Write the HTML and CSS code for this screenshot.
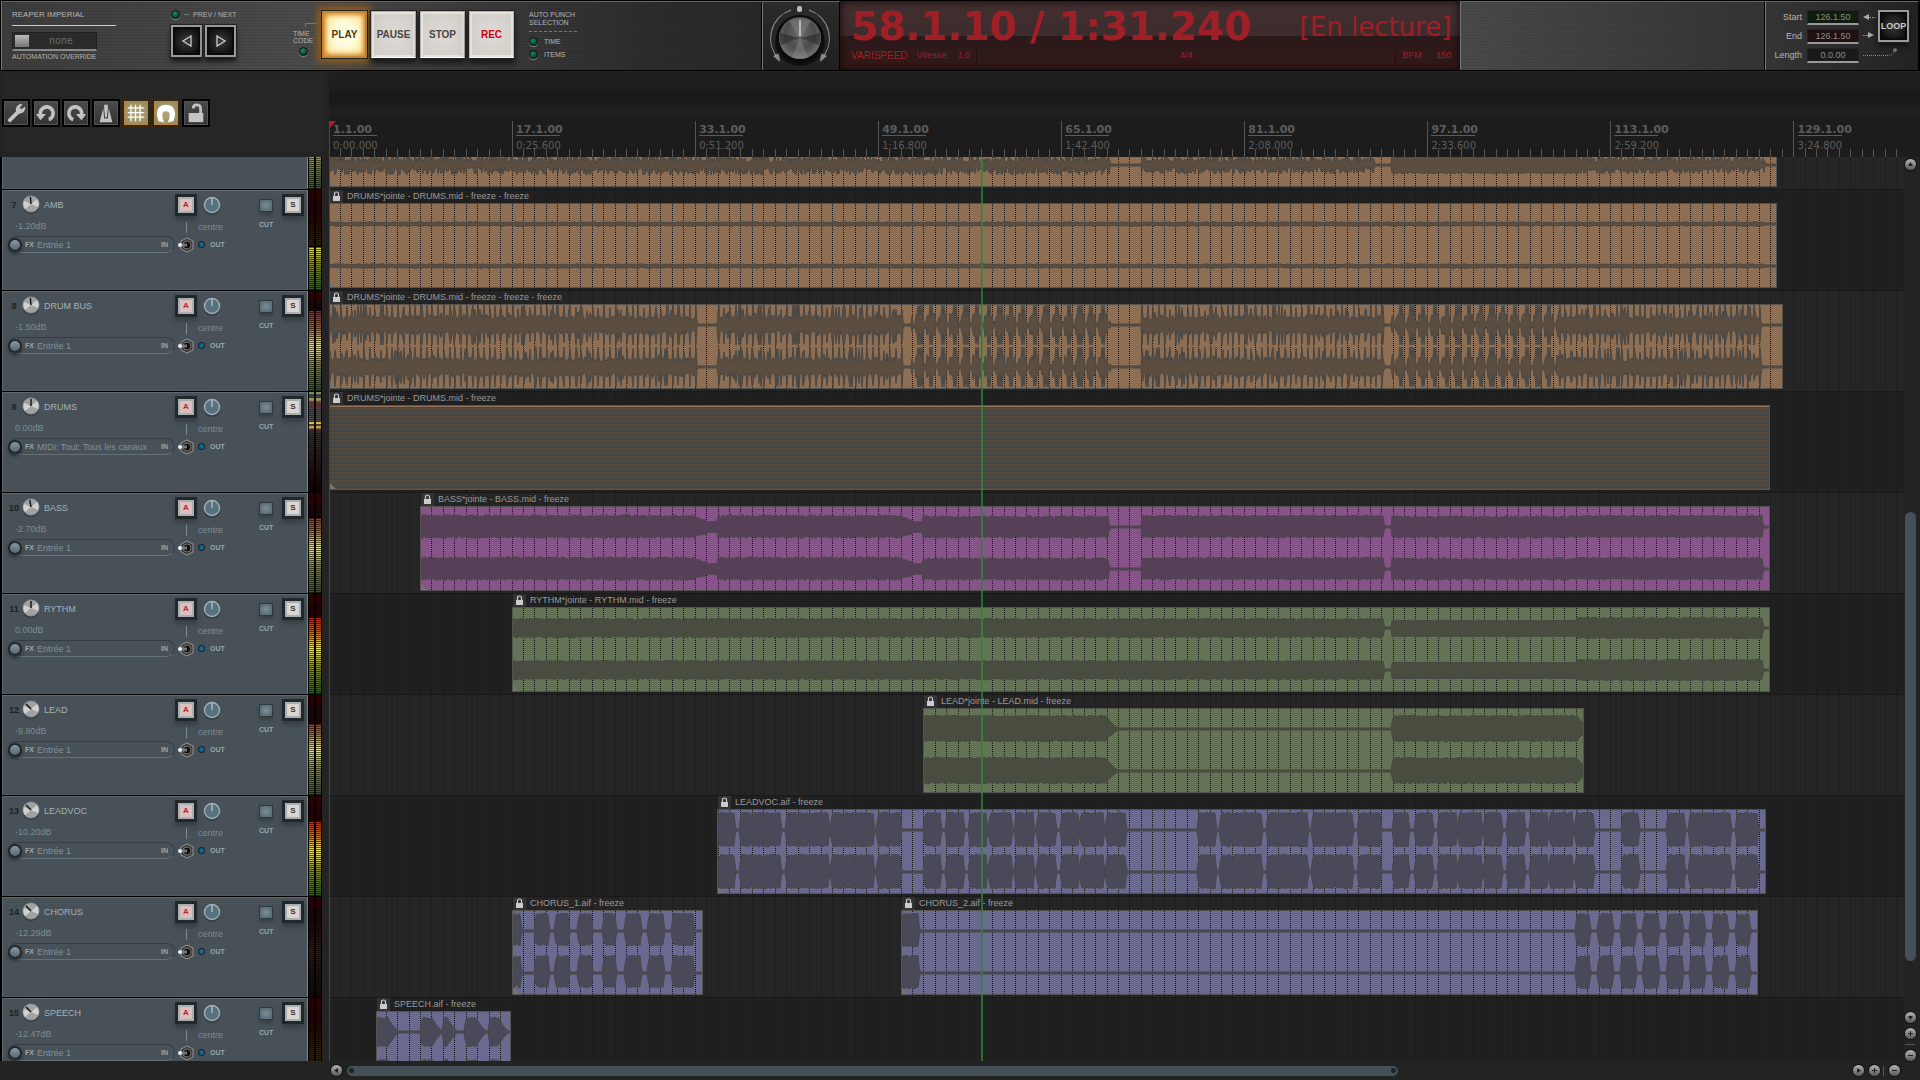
FILE: index.html
```
<!DOCTYPE html>
<html lang="fr">
<head>
    <meta charset="UTF-8">
    <meta name="viewport" content="width=device-width, initial-scale=1.0">
    <title>REAPER Imperial</title>
    <link rel="stylesheet" href="styles.css">
</head>
<body>
    <header class="transport">
        <section class="panel controls">
            <div class="brand">
                <h1>REAPER IMPERIAL</h1>
                <div class="override">
                    <span class="handle"></span>
                    <select id="override"><option>none</option></select>
                </div>
                <label for="override">AUTOMATION OVERRIDE</label>
            </div>
            <div class="prevNext">
                <div class="ledLine"><i class="led"></i><i class="dash"></i>PREV / NEXT</div>
                <div class="arrows">
                    <button class="darkButton" aria-label="Previous"><svg width="12" height="14" viewBox="0 0 12 14"><path d="M10 2 L2 7 L10 12 Z" fill="none" stroke="#ccc" stroke-width="1.3"/></svg></button>
                    <button class="darkButton" aria-label="Next"><svg width="12" height="14" viewBox="0 0 12 14"><path d="M2 2 L10 7 L2 12 Z" fill="none" stroke="#ccc" stroke-width="1.3"/></svg></button>
                </div>
            </div>
            <div class="timeCode">
                <i class="elbow"></i>
                <span>TIME<br>CODE</span>
                <i class="led"></i>
            </div>
            <div class="mainButtons">
                <button class="bigButton lit">PLAY</button>
                <button class="bigButton">PAUSE</button>
                <button class="bigButton">STOP</button>
                <button class="bigButton rec">REC</button>
            </div>
            <div class="punch">
                <div class="punchTitle">AUTO PUNCH<br>SELECTION</div>
                <div class="ledLine"><i class="led"></i>TIME</div>
                <div class="ledLine"><i class="led"></i>ITEMS</div>
            </div>
        </section>

        <section class="panel jog">
            <svg width="76" height="66" viewBox="2 1 76 66">
                <defs>
                    <radialGradient id="jogShade" cx="50%" cy="40%" r="60%">
                        <stop offset="0" stop-color="#6e6e6e"/>
                        <stop offset=".6" stop-color="#4c4c4c"/>
                        <stop offset="1" stop-color="#777"/>
                    </radialGradient>
                </defs>
                <path d="M30 9 A30 30 0 0 0 17 57" fill="none" stroke="#8a8a8a" stroke-width="1.2"/>
                <path d="M48 9 A30 30 0 0 1 61 57" fill="none" stroke="#8a8a8a" stroke-width="1.2"/>
                <path d="M12 55 L18 52 L19 61 Z M66 55 L60 52 L59 61 Z" fill="#8a8a8a"/>
                <ellipse cx="39" cy="42" rx="25" ry="23" fill="#0c0c0c" opacity=".7"/>
                <circle cx="39" cy="38" r="24" fill="#0b0b0b"/>
                <circle cx="39" cy="37" r="21" fill="url(#jogShade)"/>
                <path d="M39 37 L31 56 A21 21 0 0 0 47 56 Z M39 37 L28 20 A21 21 0 0 1 50 20 Z" fill="#8b8b8b" opacity=".45"/>
                <path d="M39 37 L19 32 A21 21 0 0 0 20 44 Z M39 37 L59 32 A21 21 0 0 1 58 44 Z" fill="#222" opacity=".5"/>
                <path d="M39 19 V35" stroke="#fff" stroke-width="1"/>
                <rect x="36" y="5" width="5" height="6" rx="2" fill="#bbb"/>
            </svg>
        </section>

        <section class="display">
            <div class="displayTop">
                <strong class="clock">58.1.10 / 1:31.240</strong>
                <span class="state">[En lecture]</span>
            </div>
            <div class="displayBottom">
                <span class="varispeed"><b>VARISPEED</b><span>Vitesse:</span><span>1.0</span></span>
                <span class="signature">4/4</span>
                <span class="bpm"><span>BPM</span><span>150</span></span>
            </div>
        </section>

        <section class="panel filler"></section>

        <section class="panel loop">
            <div class="loopFields">
                <label for="loopStart">Start</label>
                <input class="start" id="loopStart" value="126.1.50">
                <label for="loopEnd">End</label>
                <input class="end" id="loopEnd" value="126.1.50">
                <label for="loopLength">Length</label>
                <input id="loopLength" value="0.0.00">
            </div>
            <svg class="loopWires" width="36" height="60" viewBox="0 0 36 60">
                <path d="M0 11 L6 8 V14 Z M11 29 L5 26 V32 Z" fill="#aaa"/>
                <path d="M6 11.500 H13 M0 29.500 H6" stroke="#999" stroke-dasharray="2 1"/>
                <path d="M0 49.500 H26 Q31 49 31 44" fill="none" stroke="#888" stroke-dasharray="1 1"/>
                <circle cx="32" cy="44" r="2" fill="#777"/>
            </svg>
            <button class="darkButton loopButton">LOOP</button>
        </section>
    </header>

    <div class="toolbar">
        <button aria-label="Settings"><svg viewBox="0 0 24 24"><path d="M3 19 L12 10 Q11 4 17 2 L19 3 L16 6 L18 8 L22 5 Q23 12 15 13 L6 22 Q3 22 3 19 Z"/></svg></button>
        <button aria-label="Undo"><svg viewBox="0 0 24 24"><path class="stroke" d="M6 14 A7 7 0 1 1 15 19"/><path d="M1 13 H12 L6 20 Z"/></svg></button>
        <button aria-label="Redo"><svg viewBox="0 0 24 24"><path class="stroke" d="M18 14 A7 7 0 1 0 9 19"/><path d="M23 13 H12 L18 20 Z"/></svg></button>
        <button aria-label="Metronome"><svg viewBox="0 0 24 24"><path d="M9 7 L10 18 H14 L15 7 L19 22 H5 Z"/><path d="M10 3 H14 V7 L13 17 H11 L10 7 Z"/></svg></button>
        <button class="on" aria-label="Grid"><svg viewBox="0 0 24 24"><path class="thin" d="M3 6.500 H21 M3 11.500 H21 M3 16.500 H21 M6.500 3 V21 M11.500 3 V21 M16.500 3 V21"/></svg></button>
        <button class="on" aria-label="Snap"><svg viewBox="0 0 24 24"><path d="M4 21 Q2 17 2 12 Q3 3 12 3 Q21 3 22 12 Q22 17 20 21 L14 22 Q16 19 16 14 Q16 10 12 10 Q8 10 8 14 Q8 19 10 22 Z"/></svg></button>
        <button aria-label="Lock"><svg viewBox="0 0 24 24"><path d="M4 12 H20 V22 H4 Z"/><path class="mid" d="M17 12 V7 Q17 3 12.500 3 Q9 3 9 7"/></svg></button>
    </div>

    <div class="ruler">
        <svg class="ticks" id="ticks"></svg>
        <div class="marks" id="marks"></div>
    </div>

    <div class="trackList" id="trackList"></div>

    <main class="arrange">
        <svg class="grid" id="grid"></svg>
        <div class="lanes" id="lanes"></div>
        <i class="editCursor"></i>
        <i class="playCursor"></i>
    </main>

    <div class="scrollY">
        <button class="round up" aria-label="Up"></button>
        <div class="trackY"><i class="thumbY"></i></div>
        <button class="round down" aria-label="Down"></button>
        <button class="round plus" aria-label="Zoom in"></button>
        <i class="ruleY"></i>
        <button class="round minus" aria-label="Zoom out"></button>
    </div>

    <div class="scrollX">
        <button class="round left" aria-label="Left"></button>
        <div class="trackX"><i class="thumbX"></i></div>
        <button class="round right" aria-label="Right"></button>
        <button class="round plus" aria-label="Zoom in"></button>
        <i class="ruleX"></i>
        <button class="round minus" aria-label="Zoom out"></button>
    </div>

    <script src="app.js"></script>
</body>
</html>
```
FILE: styles.css
```
* {
    box-sizing: border-box;
}

body {
    margin: 0;
    height: 100vh;
    display: grid;
    grid-template-columns: 329px minmax(0, 1fr) 16px;
    grid-template-rows: 71px 86px minmax(0, 1fr) 19px;
    background: #232323;
    color: #aaa;
    font-family: "Liberation Sans", Arial, sans-serif;
    font-size: 9px;
    overflow: hidden;
}

button, input, select {
    font: inherit;
    color: inherit;
    border: 0;
    padding: 0;
    margin: 0;
    background: none;
    appearance: none;
    border-radius: 0;
}

button {
    cursor: pointer;
}

/* transport */
.transport {
    grid-column: 1 / -1;
    display: grid;
    grid-template-columns: minmax(0, 762fr) 78px minmax(0, 621fr) minmax(0, 305fr) 154px;
    background: #000;
    padding: 1px 1px 2px;
}

.panel {
    border-top: 1px solid #666;
    border-left: 1px solid #777;
    border-right: 1px solid #000;
    background: repeating-linear-gradient(rgba(0, 0, 0, 0.07) 0 1px, transparent 1px 3px), linear-gradient(90deg, #3c3c3c, #4a4a4a 40%, #2c2c2c 85%, #282828);
}

.controls {
    display: grid;
    grid-template-columns: 159px 118px 32px 208px 1fr;
    padding-left: 10px;
    font-size: 8px;
    line-height: 8px;
    color: #b4b4b4;
}

.brand h1 {
    margin: 0;
    width: 104px;
    padding: 9px 0 6px;
    border-bottom: 1px solid #ccc;
    font-size: 8px;
    font-weight: normal;
    line-height: 8px;
}

.brand label {
    font-size: 7px;
}

.override {
    display: flex;
    width: 85px;
    height: 19px;
    margin: 6px 0 2px;
    padding: 2px;
    background: #2b2b2b;
    border: 1px solid #222;
    border-bottom: 2px solid #888;
}

.handle {
    width: 14px;
    background: linear-gradient(#bbb, #777);
}

.override select {
    flex: 1;
    padding-left: 20px;
    color: #65717a;
    font: 10px "Liberation Mono", monospace;
}

.led {
    width: 9px;
    height: 9px;
    border-radius: 50%;
    border: 1px solid #111;
    background: radial-gradient(circle at 40% 35%, #1c8a5c, #04402a 70%);
    box-shadow: 0 1px 1px #888;
}

.dash {
    width: 5px;
    height: 1px;
    background: #777;
}

.ledLine {
    display: flex;
    align-items: center;
    gap: 6px;
}

.prevNext {
    padding-top: 7px;
}

.prevNext .ledLine {
    font-size: 7px;
    gap: 4px;
    height: 11px;
}

.arrows {
    display: flex;
    gap: 3px;
    padding-top: 5px;
}

.darkButton {
    width: 31px;
    height: 32px;
    display: flex;
    align-items: center;
    justify-content: center;
    border: 2px solid #999;
    outline: 1px solid #222;
    background: radial-gradient(#3a3a3a, #0e0e0e 75%);
    box-shadow: inset 0 0 0 2px #0a0a0a, 0 4px 5px #111;
}

.timeCode {
    width: 28px;
    display: flex;
    flex-direction: column;
    align-items: center;
    justify-self: start;
    padding-top: 21px;
    gap: 3px;
    font-size: 7px;
    line-height: 7px;
}

.elbow {
    width: 12px;
    height: 4px;
    align-self: flex-end;
    border-top: 1px solid #777;
    border-left: 1px solid #777;
}

.mainButtons {
    display: flex;
    gap: 2px;
    padding-top: 8px;
}

.bigButton {
    width: 47px;
    height: 49px;
    border: 2px solid #b5b2ae;
    border-bottom-color: #fff;
    outline: 1px solid #222;
    outline-offset: -1px;
    background: radial-gradient(#dedad6, #cfcbc7);
    box-shadow: inset 0 0 0 2px #e6e3df, 0 5px 6px #1a1a1a;
    color: #4a4644;
    font-size: 10px;
    font-weight: bold;
}

.bigButton.rec {
    color: #c8000a;
}

.bigButton.lit {
    border: 3px solid #c78836;
    background: radial-gradient(#fffde0 35%, #ffeaa0 75%, #f2b655);
    box-shadow: inset 0 0 4px 2px #d18e3c, 0 0 8px 3px #9c5f17;
    color: #4a3c10;
}

.punch {
    display: flex;
    flex-direction: column;
    gap: 4px;
    padding-top: 9px;
    font-size: 7px;
}

.punchTitle {
    width: 48px;
    padding-bottom: 4px;
    border-bottom: 1px dashed #777;
    margin-bottom: 1px;
    white-space: nowrap;
}

.jog {
    background: linear-gradient(#2b2b2b, #202020);
}

.display {
    display: flex;
    flex-direction: column;
    justify-content: space-between;
    background: linear-gradient(#433031, #3d2c2d 50%, #2b1a1b 51%, #341818);
    box-shadow: inset 0 0 8px #120808;
    color: #a01f27;
    padding: 0 9px 4px 11px;
    white-space: nowrap;
}

.displayTop {
    display: flex;
    justify-content: space-between;
    align-items: center;
    height: 48px;
    padding-top: 4px;
    font-family: "DejaVu Sans", sans-serif;
}

.clock {
    font-size: 39px;
    line-height: 46px;
}

.state {
    font-size: 26px;
}

.displayBottom {
    display: grid;
    grid-template-columns: 126px 1fr 56px;
    height: 16px;
    line-height: 11px;
    font-size: 9px;
}

.varispeed {
    display: flex;
    gap: 9px;
    border-right: 1px solid #1c1010;
}

.varispeed b {
    font-size: 10px;
    font-weight: normal;
}

.signature {
    text-align: center;
}

.bpm {
    display: flex;
    justify-content: space-between;
    border-left: 1px solid #1c1010;
    padding-left: 6px;
}

.filler {
    background: repeating-linear-gradient(rgba(0, 0, 0, 0.06) 0 1px, transparent 1px 3px), linear-gradient(90deg, #494949, #333);
}

.loop {
    display: flex;
    align-items: flex-start;
    background: linear-gradient(90deg, #353535, #222);
}

.loopFields {
    display: grid;
    grid-template-columns: 36px 52px;
    gap: 4px 5px;
    padding-top: 8px;
    line-height: 15px;
    text-align: right;
    color: #b5b5b5;
}

.loopFields input {
    width: 52px;
    height: 15px;
    background: #191919;
    border: 1px solid #222;
    border-bottom: 2px solid #999;
    text-align: center;
    color: #8d8d8d;
}

.loopFields .start {
    background: #0f1c10;
}

.loopFields .end {
    background: #201011;
}

.loopWires {
    margin-top: 4px;
    margin-left: 4px;
}

.loopButton {
    margin: 8px 0 0 -21px;
    flex: none;
    font-size: 9px;
    font-weight: bold;
    color: #ccc;
}

/* toolbar */
.toolbar {
    display: flex;
    align-items: flex-start;
    gap: 2px;
    margin: 2px 7px 5px 2px;
    padding-top: 26px;
    background: #262626;
}

.toolbar button {
    width: 28px;
    height: 28px;
    border: 2px solid #000;
    background: linear-gradient(#4b4b4b, #333);
    box-shadow: inset 0 0 0 1px #555;
}

.toolbar button.on {
    border-color: #3a2508;
    background: radial-gradient(#b3a878, #8f8557);
    box-shadow: inset 0 0 0 1px #b28446;
}

.toolbar svg {
    display: block;
    width: 22px;
    height: 22px;
    margin: 1px;
    fill: #c3c3c3;
    stroke: none;
}

.toolbar .on svg {
    fill: #fff;
}

.toolbar .stroke {
    fill: none;
    stroke: #c3c3c3;
    stroke-width: 4;
}

.toolbar .mid {
    fill: none;
    stroke: #c3c3c3;
    stroke-width: 3;
}

.toolbar .thin {
    stroke: #fff;
    stroke-width: 1.4;
}

/* ruler */
.ruler {
    grid-column: 2 / 4;
    position: relative;
    display: flex;
    align-items: flex-end;
    background: linear-gradient(#232323 0 2px, #1f1f1f 2px 18px, #1a1a1a 18px 34px, #1f1f1f 34px 47px, #1c1c1c 47px);
}

.ticks {
    position: absolute;
    left: 0;
    bottom: 0;
    width: calc(100% - 16px);
    height: 36px;
}

.marks {
    display: flex;
    width: calc(100% - 16px);
    height: 36px;
}

.mark {
    flex: none;
    min-width: 0;
    padding: 2px 0 0 4px;
    color: #5c5c5c;
    font-family: "DejaVu Sans", sans-serif;
    white-space: nowrap;
}

.mark b {
    display: block;
    width: 44px;
    height: 13px;
    border-bottom: 1px solid #5c5c5c;
    font-size: 11px;
    line-height: 13px;
}

.mark span {
    display: block;
    font-size: 10px;
    line-height: 19px;
}

/* track control panels */
.trackList {
    margin-right: 7px;
    padding-left: 2px;
    overflow: hidden;
    background: #000;
}

.track {
    display: flex;
    height: 101px;
    border-bottom: 1px solid #000;
}

.track:first-child, .lane:first-child {
    margin-top: -68px;
}

.strip {
    flex: 1;
    display: grid;
    grid-template-columns: 171px 24px 61px 1fr;
    background: #475157;
    border: 1px solid #5d6a70;
    border-right-color: #7a878d;
    border-bottom-color: #4e5a60;
}

.trackHead {
    display: grid;
    grid-template-columns: 16px 20px 1fr;
    align-items: center;
    height: 27px;
    padding-left: 3px;
    text-align: center;
}

.number {
    color: #1d2225;
    font-weight: bold;
    font-size: 9px;
}

.name {
    padding-left: 2px;
    color: #a5b1b6;
    text-align: left;
}

.volume {
    height: 17px;
    padding-left: 12px;
    line-height: 17px;
    color: #7d8c93;
}

.knob {
    display: block;
    width: 18px;
    height: 20px;
}

.pill {
    display: flex;
    align-items: center;
    gap: 3px;
    width: 167px;
    height: 17px;
    margin: 1px 0 0 5px;
    padding-right: 6px;
    border: 1px solid #333e44;
    border-bottom-color: #63727a;
    border-radius: 9px;
    color: #9aa7ad;
    font-size: 7px;
    font-weight: bold;
}

.pill button {
    width: 14px;
    height: 14px;
    margin-left: -1px;
    border-radius: 50%;
    border: 2px solid #20282c;
    background: linear-gradient(#8896a0, #566872);
    box-shadow: 0 2px 3px #2a3236;
}

.pill select {
    flex: 1;
    color: #82929a;
    font-size: 9px;
    font-weight: normal;
}

.armColumn, .panColumn {
    display: flex;
    flex-direction: column;
}

.keyButton {
    width: 22px;
    height: 22px;
    flex: none;
    border: 3px solid #22272a;
    background: #ddd5d2;
    box-shadow: inset 0 0 0 2px #a5b0b5, 0 4px 4px #363f44;
    color: #333;
    font-size: 8px;
    font-weight: bold;
    line-height: 14px;
}

.keyButton.arm {
    background: #dcc0c0;
    color: #b3272f;
}

.armColumn {
    align-items: center;
    padding-top: 3px;
}

.stem {
    width: 1px;
    height: 11px;
    margin: 6px 0 4px;
    background: #7c898f;
}

.toggle {
    width: 18px;
    height: 16px;
}

.toggle svg, .knob svg {
    display: block;
}

.panColumn {
    padding-top: 5px;
}

.panColumn span {
    padding-top: 3px;
    line-height: 17px;
    color: #7d8c93;
}

.panColumn .knob {
    margin-left: 5px;
}

.out {
    display: flex;
    align-items: center;
    gap: 5px;
    height: 12px;
    margin-top: 2px;
    font-size: 7px;
    font-weight: bold;
    color: #9aa7ad;
}

.out .led {
    width: 7px;
    height: 7px;
    background: #0f6a94;
    box-shadow: none;
}

.muteSolo {
    display: flex;
    align-items: flex-start;
    justify-content: space-between;
    padding: 3px 3px 0 0;
    color: #9aa7ad;
    font-size: 7px;
    font-weight: bold;
    text-align: center;
}

.muteSolo label {
    display: block;
    padding-top: 9px;
}

.cut {
    display: block;
    width: 14px;
    height: 13px;
    margin: 5px 0 0;
    border: 1px solid #2e393f;
    background: radial-gradient(#7c8e98, #51626b);
    box-shadow: 0 3px 3px #384146;
}

.meter {
    width: 14px;
    display: grid;
    grid-template-columns: 5px 5px;
    gap: 2px;
    padding-left: 1px;
    background: #000;
}

.meterBar {
    background: repeating-linear-gradient(transparent 0 1px, rgba(0, 0, 0, 0.6) 1px 2px), linear-gradient(#b01818 0 20%, #b8641c 38%, #efe85a 55%, #8f8f2a 72%, #2c5a28);
}

.meterOff {
    display: block;
    background: linear-gradient(#2c0000 0 10px, rgba(12, 0, 0, 0.85) 10px);
    border-bottom: 1px solid #000;
}

.meter.midi .meterBar {
    background: repeating-linear-gradient(#4a4a4a 0 1px, #3a2626 1px 2px);
}

.meter.midi .meterOff {
    height: 100px;
    border: 0;
    background: linear-gradient(#7d8a50 0 2px, transparent 2px 6px, #909a50 6px 8px, #5a3030 10px 16px, transparent 16px 30px, #e0c040 30px 32px, #4a3a2a 32px 34px, #c0a040 34px 36px, #4a2a2a 37px, rgba(20, 0, 0, 0.4) 42px, #100000);
}

/* arrange view */
.arrange {
    position: relative;
    overflow: hidden;
}

.lane {
    height: 101px;
    position: relative;
    background: #202020;
    border-bottom: 1px solid #191919;
}

.lane:nth-child(odd) {
    background: #252525;
}

.grid {
    position: absolute;
    inset: 0;
    width: 100%;
    height: 100%;
    z-index: 1;
}

.clip {
    position: absolute;
    top: 0;
    z-index: 2;
}

.clipLabel {
    display: flex;
    gap: 4px;
    height: 13px;
    margin-left: 1px;
    line-height: 13px;
    color: #9a9a9a;
    white-space: nowrap;
}

.clipLabel svg {
    background: #333;
}

.clipBody {
    display: block;
    width: 100%;
    height: 85px;
    outline: 1px solid #55534f;
    outline-offset: -1px;
}

.clipBody line {
    stroke: #111;
    stroke-dasharray: 1 1;
    shape-rendering: crispEdges;
}

.clipBody path {
    stroke: #494846;
    stroke-width: 1;
}

.drums { background: #8e6f54; }
.drums path { fill: #5b4d40; }
.bass { background: #87548a; }
.bass path { fill: #564058; }
.synth { background: #647355; }
.synth path { fill: #484d3f; }
.voice { background: #6a6a91; }
.voice path { fill: #4a4959; }

.midiNotes {
    background: linear-gradient(#94745a 0 2px, transparent 2px), repeating-linear-gradient(#574a40 0 1px, #464544 1px 3px, #584b3f 3px 4px, #464544 4px 5px, #504b42 5px 6px, #464544 6px 8px);
}

.editCursor, .playCursor {
    position: absolute;
    top: 0;
    bottom: 0;
    left: 0;
    width: 1px;
    background: #a3202a;
    z-index: 3;
}

.playCursor {
    left: 41.4%;
    width: 2px;
    background: rgba(40, 150, 60, 0.65);
}

/* scrollbars */
.scrollY {
    grid-column: 3;
    grid-row: 3;
    display: flex;
    flex-direction: column;
    align-items: center;
    gap: 5px;
    padding: 2px 4px 0 0;
}

.trackY {
    flex: 1;
    width: 11px;
}

.thumbY {
    display: block;
    width: 11px;
    height: 54%;
    margin-top: 337px;
    border-radius: 6px;
    background: #465157;
}

.scrollX {
    grid-column: 2;
    grid-row: 4;
    display: flex;
    align-items: center;
    gap: 5px;
    padding: 0 4px 0 2px;
}

.trackX {
    flex: 1;
}

.thumbX {
    display: flex;
    align-items: center;
    justify-content: space-between;
    width: 70%;
    height: 10px;
    padding: 0 2px;
    border-radius: 5px;
    background: #465157;
}

.thumbX::before, .thumbX::after {
    content: "";
    width: 5px;
    height: 5px;
    border-radius: 50%;
    background: #1d2326;
}

.round {
    flex: none;
    width: 11px;
    height: 11px;
    border-radius: 50%;
    background: linear-gradient(#b5b5b5, #555);
    box-shadow: 0 0 1px 1px #111;
}

.round svg {
    display: block;
}

.ruleX {
    width: 1px;
    height: 10px;
    margin: 0 0 0 -2px;
    background: #555;
}

.ruleY {
    width: 10px;
    height: 1px;
    background: #555;
}
```
FILE: app.js
```
// one unit is one pixel of a 1575px wide timeline
const TOTAL = 1575;
const MEASURE = 11.442;

const percent = units => (units / TOTAL * 100) + '%';

const vocals = [
    [389, 406], [411, 452, [423, 434]], [457, 500, [469, 479]], [502, 545, [515, 526]], [548, 572, [561]],
    [595, 612], [617, 635], [640, 658], [660, 683], [686, 705], [708, 727], [732, 750], [751, 775], [777, 797],
    [869, 887], [891, 933, [903]], [938, 979, [949]], [983, 1024, [995, 1006]], [1029, 1052],
    [1064, 1080], [1086, 1104], [1109, 1128], [1129, 1153], [1155, 1173], [1178, 1196], [1201, 1219],
    [1220, 1244], [1246, 1265], [1293, 1310], [1338, 1356], [1360, 1402, [1373]], [1407, 1429]
];
const chorus1 = [[183, 192, [188]], [206, 220], [226, 240], [249, 263], [274, 287], [296, 312], [319, 335], [343, 365]];
const chorus2 = [[572, 590], [1247, 1261, [1250, 1258]], [1269, 1284, [1272]], [1292, 1307], [1314, 1330], [1338, 1354], [1361, 1376], [1384, 1399, [1387, 1392]], [1407, 1421, [1411, 1415]]];
const speech = [[47, 60], [92, 104], [114, 119], [136, 148], [160, 170]];
const drumParts = [[0, 367, 'busy'], [389, 573, 'busy'], [583, 780, 'groove'], [813, 1054, 'busy'], [1063, 1230, 'groove'], [1230, 1431, 'busy']];

const blocks = (list, up, down, tail, curve) => list.map(b => ({ from: b[0], to: b[1] - 1, notches: b[2], up, down, tail, curve, noise: 2 }));

const tracks = [
    { number: 6, level: 20, clips: [
        { from: 0, to: 1448, kind: 'drums', label: '', parts: [
            { from: 0, to: 780, up: 2, down: 2, noise: 8 }, { from: 813, to: 1045, up: 2, down: 2, noise: 7 },
            { from: 1063, to: 1250, up: 8, down: 7, noise: 2 }, { from: 1250, to: 1435, up: 2, down: 2, noise: 7 }] }] },
    { number: 7, name: 'AMB', db: '-1.20dB', input: 'Entrée 1', level: 57, angle: -5, clips: [
        { from: 0, to: 1448, kind: 'drums', label: 'DRUMS*jointe - DRUMS.mid - freeze - freeze', parts: [
            { from: 0, to: 1435, up: 1, down: 1, noise: 1.4 }] }] },
    { number: 8, name: 'DRUM BUS', db: '-1.50dB', input: 'Entrée 1', level: 20, angle: -5, clips: [
        { from: 0, to: 1454, kind: 'drums', label: 'DRUMS*jointe - DRUMS.mid - freeze - freeze - freeze',
            parts: drumParts.map(p => ({ from: p[0], to: p[1], up: 5, down: 5, noise: 5, beat: p[2] })) }] },
    { number: 9, name: 'DRUMS', db: '0.00dB', input: 'MIDI: Tout: Tous les canaux', level: 0, angle: 0, midi: true, clips: [
        { from: 0, to: 1441, kind: 'midiNotes', label: 'DRUMS*jointe - DRUMS.mid - freeze' }] },
    { number: 10, name: 'BASS', db: '-2.70dB', input: 'Entrée 1', level: 25, angle: -10, clips: [
        { from: 91, to: 1441, kind: 'bass', label: 'BASS*jointe - BASS.mid - freeze', parts: [
            { from: 91, to: 366, up: 10, down: 9, noise: 2.5 }, { from: 367, to: 371, up: 9, down: 8, noise: 0.5 },
            { from: 372, to: 376, up: 7, down: 7, noise: 0.5 }, { from: 377, to: 388, up: 5, down: 5, noise: 0.5 },
            { from: 389, to: 573, up: 10, down: 9, noise: 2.5 }, { from: 574, to: 578, up: 9, down: 8, noise: 0.5 },
            { from: 579, to: 583, up: 7, down: 7, noise: 0.5 }, { from: 584, to: 593, up: 5, down: 5, noise: 0.5 },
            { from: 594, to: 779, up: 9, down: 9, noise: 2.5 }, { from: 813, to: 1054, up: 10, down: 9, noise: 2 },
            { from: 1063, to: 1240, up: 9, down: 9, noise: 2.5 }, { from: 1241, to: 1433, up: 10, down: 9, noise: 2 }] }] },
    { number: 11, name: 'RYTHM', db: '0.00dB', input: 'Entrée 1', level: 24, angle: 0, clips: [
        { from: 183, to: 1441, kind: 'synth', label: 'RYTHM*jointe - RYTHM.mid - freeze', parts: [
            { from: 183, to: 1054, up: 8, down: 8, noise: 2 }, { from: 1063, to: 1247, up: 7, down: 8, noise: 1 },
            { from: 1248, to: 1433, up: 9, down: 9, noise: 2 }] }] },
    { number: 12, name: 'LEAD', db: '-9.80dB', input: 'Entrée 1', level: 29, angle: -45, clips: [
        { from: 594, to: 1255, kind: 'synth', label: 'LEAD*jointe - LEAD.mid - freeze', parts: [
            { from: 594, to: 776, up: 12, down: 11, noise: 2, tail: 14 }, { from: 1063, to: 1248, up: 12, down: 11, noise: 2, tail: 12 }] }] },
    { number: 13, name: 'LEADVOC', db: '-10.20dB', input: 'Entrée 1', level: 26, angle: -45, clips: [
        { from: 388, to: 1437, kind: 'voice', label: 'LEADVOC.aif - freeze', parts: blocks(vocals, 16, 15, 3, 3) }] },
    { number: 14, name: 'CHORUS', db: '-12.29dB', input: 'Entrée 1', level: 100, angle: -45, clips: [
        { from: 183, to: 374, kind: 'voice', label: 'CHORUS_1.aif - freeze', parts: blocks(chorus1, 16, 13, 3, 3) },
        { from: 572, to: 1429, kind: 'voice', label: 'CHORUS_2.aif - freeze', parts: blocks(chorus2, 16, 14, 3, 3) }] },
    { number: 15, name: 'SPEECH', db: '-12.47dB', input: 'Entrée 1', level: 100, angle: -45, clips: [
        { from: 47, to: 182, kind: 'voice', label: 'SPEECH.aif - freeze', parts: blocks(speech, 13, 13, 12, 1.6) }] }
];

let seed = 7;
function random() {
    seed = (seed * 16807) % 2147483647;
    return seed / 2147483647;
}

// extra height of a drum hit at x
function hit(beat, x) {
    if (beat === 'busy') {
        const phase = x % (MEASURE / 2);
        if (phase < 1) return 8 + random() * 10;
        return random() < 0.14 ? random() * 14 : 0;
    }
    const bar = (x % MEASURE) / MEASURE;
    if (bar > 0.45 && bar < 0.85) return Math.round(x) % 2 ? 14 : random() * 4;
    return bar < 0.25 ? -6 : random() * 3;
}

// height of the waveform above and below its axis at x
function levelAt(parts, x) {
    for (const p of parts) {
        const tail = p.tail || 1;
        if (x < p.from || x > p.to + tail) continue;
        if (x > p.to && parts.some(q => q !== p && x >= q.from && x <= q.to)) continue;
        let factor = 1;
        if (p.tail) factor = Math.min(1, 0.5 + (x - p.from) / 3);
        if (x > p.to) factor = Math.pow(1 - (x - p.to) / (tail + 1), p.curve || 1.3);
        if (p.notches && p.notches.some(n => Math.abs(n - x) < 1)) factor *= 0.6;
        const boost = p.beat ? hit(p.beat, x) : 0;
        return [
            Math.min(20, Math.max(1, (p.up + boost + random() * p.noise) * factor)),
            Math.min(20, Math.max(1, (p.down + boost + random() * p.noise) * factor))
        ];
    }
    return [1, 1];
}

function wavePath(clip, axis) {
    const top = [];
    const bottom = [];
    for (let x = clip.from; x <= clip.to; x++) {
        const [up, down] = levelAt(clip.parts, x);
        top.push(`${x - clip.from} ${(axis - up).toFixed(1)}`);
        bottom.unshift(`${x - clip.from} ${(axis + down).toFixed(1)}`);
    }
    return `<path d="M${top.join('L')}L${bottom.join('L')}Z"/>`;
}

function clipMarkup(clip) {
    const width = clip.to - clip.from;
    let inside = '';
    if (clip.parts) {
        for (let m = 1; m * MEASURE < clip.to; m++) {
            const x = Math.floor(m * MEASURE) - clip.from + 0.5;
            if (x > 0) inside += `<line x1="${x}" x2="${x}" y1="1" y2="84"/>`;
        }
        inside += wavePath(clip, 21) + wavePath(clip, 63);
    }
    inside += '<polygon points="0,77 8,85 0,85" fill="#77746f"/>';
    return `<div class="clip" style="left:${percent(clip.from)};width:${percent(width)}">
        <div class="clipLabel">
            <svg width="13" height="13" viewBox="0 0 13 13"><path d="M3 6 H10 V11 H3 Z" fill="#ccc"/><path d="M4.500 6 V4 Q4.500 2 6.500 2 Q8.500 2 8.500 4 V6" fill="none" stroke="#ccc" stroke-width="1.2"/></svg>
            <span>${clip.label}</span>
        </div>
        <svg class="clipBody ${clip.kind}" viewBox="0 0 ${width} 85" preserveAspectRatio="none">${inside}</svg>
    </div>`;
}

function volumeKnob(angle) {
    return `<svg width="18" height="20" viewBox="0 0 18 20">
        <ellipse cx="9" cy="12" rx="8" ry="7" fill="#2b3438" opacity=".6"/>
        <circle cx="9" cy="9" r="8" fill="#a2a2a2" stroke="#8b9296"/>
        <path d="M9 9 L3 14 A8 8 0 0 1 2 6 Z M9 9 L15 4 A8 8 0 0 1 16 12 Z" fill="#fff" opacity=".5"/>
        <path d="M9 9 V2" stroke="#111" stroke-width="1.4" transform="rotate(${angle} 9 9)"/>
    </svg>`;
}

function panKnob() {
    return `<svg width="18" height="20" viewBox="0 0 18 20">
        <ellipse cx="9" cy="12" rx="8" ry="7" fill="#2b3438" opacity=".6"/>
        <circle cx="9" cy="9" r="7.500" fill="#567180" stroke="#a3adb2" stroke-width="1.4"/>
        <path d="M9 9 V2" stroke="#d5dde0"/>
    </svg>`;
}

function stripMarkup(t) {
    return `<div>
            <div class="trackHead">
                <span class="number">${t.number}</span>
                <button class="knob" aria-label="Volume">${volumeKnob(t.angle)}</button>
                <span class="name">${t.name}</span>
            </div>
            <div class="volume">${t.db}</div>
            <div class="pill">
                <button aria-label="FX ${t.name}"></button>FX
                <select aria-label="Input ${t.name}"><option>${t.input}</option></select>IN
            </div>
        </div>
        <div class="armColumn">
            <button class="keyButton arm">A</button>
            <i class="stem"></i>
            <button class="toggle" aria-label="In or out"><svg width="18" height="16" viewBox="0 0 18 16">
                <path d="M10 1 L16 4 V12 L10 15 L4 12 V4 Z" fill="#3a3a3a" stroke="#999"/>
                <circle cx="10" cy="8" r="4" fill="#111" stroke="#777"/>
                <path d="M5 8 H10" stroke="#777" stroke-width="3"/>
                <circle cx="3" cy="8" r="2" fill="#eee"/>
            </svg></button>
        </div>
        <div class="panColumn">
            <button class="knob" aria-label="Pan">${panKnob()}</button>
            <span>centre</span>
            <div class="out"><i class="led"></i>OUT</div>
        </div>
        <div class="muteSolo">
            <div><button class="cut" id="cut${t.number}"></button><label for="cut${t.number}">CUT</label></div>
            <button class="keyButton">S</button>
        </div>`;
}

function trackMarkup(t) {
    const off = t.midi ? '' : `style="height:${t.level}%"`;
    return `<div class="track">
        <div class="strip">${t.name ? stripMarkup(t) : ''}</div>
        <div class="meter ${t.midi ? 'midi' : ''}">
            <div class="meterBar"><i class="meterOff" ${off}></i></div>
            <div class="meterBar"><i class="meterOff" ${off}></i></div>
        </div>
    </div>`;
}

function drawRuler() {
    const times = ['0:00.000', '0:25.600', '0:51.200', '1:16.800', '1:42.400', '2:08.000', '2:33.600', '2:59.200', '3:24.800'];
    let ticks = '';
    let lines = '';
    for (let m = 0; m * MEASURE < TOTAL; m++) {
        const x = percent(Math.floor(m * MEASURE) + 0.5);
        ticks += `<line x1="${x}" x2="${x}" y1="${m % 16 ? 28 : 0}" y2="36" stroke="#555"/>`;
        lines += `<line x1="${x}" x2="${x}" y1="0" y2="100%" stroke="#181818" stroke-dasharray="1 1"/>`;
    }
    ticks += '<path d="M0 0 H7 L1 7 V36 H0 Z" fill="#a3202a"/>';
    document.getElementById('ticks').innerHTML = ticks;
    document.getElementById('grid').innerHTML = lines;
    document.getElementById('marks').innerHTML = times.map((time, i) =>
        `<div class="mark" style="width:${percent(Math.min(16 * MEASURE, TOTAL - i * 16 * MEASURE))}"><b>${i * 16 + 1}.1.00</b><span>${time}</span></div>`
    ).join('');
}

// glyphs of the small round scroll and zoom buttons
const glyphs = {
    up: 'M3 7 H8 L5.500 3 Z', down: 'M3 4 H8 L5.500 8 Z', left: 'M7 3 V8 L3 5.500 Z', right: 'M4 3 V8 L8 5.500 Z',
    plus: 'M3 5 H5 V3 H6 V5 H8 V6 H6 V8 H5 V6 H3 Z', minus: 'M3 5 H8 V6 H3 Z'
};
document.querySelectorAll('.round').forEach(button => {
    button.innerHTML = `<svg width="11" height="11" viewBox="0 0 11 11"><path d="${glyphs[button.classList[1]]}" fill="#222"/></svg>`;
});

drawRuler();
document.getElementById('trackList').innerHTML = tracks.map(trackMarkup).join('');
document.getElementById('lanes').innerHTML = tracks.map(t => `<div class="lane">${t.clips.map(clipMarkup).join('')}</div>`).join('');
```
